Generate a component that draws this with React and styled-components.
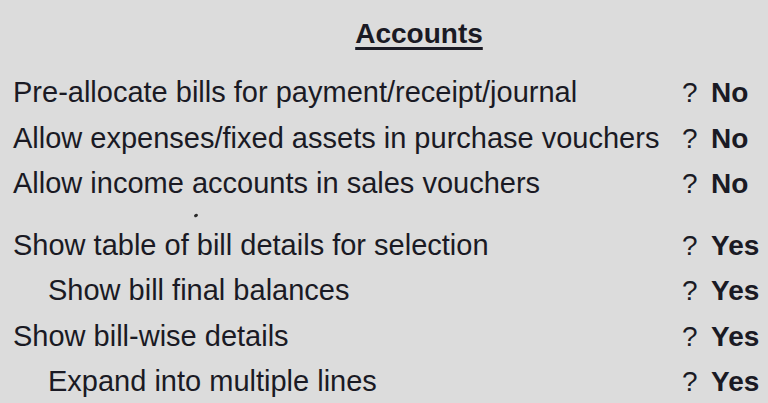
import React from 'react';
import styled, { createGlobalStyle } from 'styled-components';

const GlobalStyle = createGlobalStyle`
	html, body {
		margin: 0;
		padding: 0;
		background: #dcdcdc;
	}
	body {
		font-family: "Liberation Sans", Arial, sans-serif;
		color: #1a1a24;
	}
`

const Screen = styled.div`
	width: 768px;
	height: 403px;
	overflow: hidden;
	box-sizing: border-box;
	padding: 11px 0 0 13px;
	background: #dcdcdc;
`

const Title = styled.div`
	text-align: center;
	padding: 0 13px 0 70px;
	height: 46px;
	line-height: 46px;
	margin-bottom: 13px;
	font-size: 28px;
	font-weight: bold;
	span {
		text-decoration: underline;
		text-decoration-thickness: 3px;
		text-underline-offset: 4px;
	}
`

const Row = styled.div`
	display: flex;
	align-items: center;
	height: 45.5px;
	line-height: 45.5px;
	font-size: 29px;
	white-space: nowrap;
`

const Label = styled.div`
	width: ${p => (p.$sub ? 634 : 669)}px;
	padding-left: ${p => (p.$sub ? 35 : 0)}px;
`

const Ask = styled.span`
	width: 29px;
	font-size: 28px;
`

const Value = styled.span`
	font-weight: bold;
	font-size: 28px;
`

const Spacer = styled.div`
	height: 16px;
	position: relative;
`

const Tick = styled.span`
	position: absolute;
	left: 181px;
	top: 7px;
	width: 4px;
	height: 3px;
	border-radius: 2px;
	background: #2a2a2a;
	transform: rotate(-35deg);
`

const top = [
	['Pre-allocate bills for payment/receipt/journal', 'No'],
	['Allow expenses/fixed assets in purchase vouchers', 'No'],
	['Allow income accounts in sales vouchers', 'No'],
]

const bottom = [
	['Show table of bill details for selection', 'Yes'],
	['Show bill final balances', 'Yes', true],
	['Show bill-wise details', 'Yes'],
	['Expand into multiple lines', 'Yes', true],
]

const Line = ({ text, value, sub }) => (
	<Row>
		<Label $sub={sub}>{text}</Label>
		<Ask>?</Ask>
		<Value>{value}</Value>
	</Row>
)

const App = () => {
	return (
		<Screen>
			<GlobalStyle />
			<Title><span>Accounts</span></Title>
			{top.map(([t, v, s]) => <Line key={t} text={t} value={v} sub={s} />)}
			<Spacer><Tick /></Spacer>
			{bottom.map(([t, v, s]) => <Line key={t} text={t} value={v} sub={s} />)}
		</Screen>
	);
}

export default App;
